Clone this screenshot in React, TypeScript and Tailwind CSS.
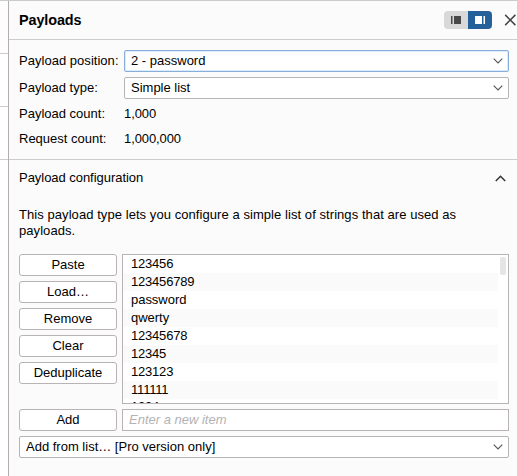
import type { ReactNode } from "react";

const items = ["123456", "123456789", "password", "qwerty", "12345678", "12345", "123123", "111111", "1234"];
const actions = ["Paste", "Load…", "Remove", "Clear", "Deduplicate"];

function Chevron() {
  return (
    <svg className="mr-[5px] shrink-0" width="10" height="6" viewBox="0 0 10 6" fill="none" stroke="#555" strokeWidth="1.1">
      <path d="M0.7 0.7 5 5 9.3 0.7" />
    </svg>
  );
}

function Select({ children, focused = false }: { children: ReactNode; focused?: boolean }) {
  return (
    <div
      className={`flex h-[22px] flex-1 items-center justify-between rounded-[2px] border bg-white pl-1.5 ${
        focused ? "border-[#87afda] shadow-[inset_0_0_0_1px_#dcebfa]" : "border-[#b8b4b6]"
      }`}
    >
      <span>{children}</span>
      <Chevron />
    </div>
  );
}

function Button({ children }: { children: ReactNode }) {
  return (
    <button className="h-[22px] w-[98px] shrink-0 rounded-[3px] border border-[#b8b4b6] bg-white leading-5">
      {children}
    </button>
  );
}

export default function App() {
  return (
    <div className="flex h-[476px] w-[517px] overflow-hidden border-t border-[#c8cccc] bg-[#fbfbfb] font-['Liberation_Sans',Arial,sans-serif] text-[13px] leading-4 text-black">
      <div className="w-2 shrink-0 bg-white">
        <div className="h-[53px] border-b border-[#cccccc] bg-[#fdfdfd]" />
        <div className="h-[53px] border-b border-[#cccccc]" />
        <div className="h-[53px] border-b border-[#cccccc]" />
      </div>
      <div className="flex min-w-0 flex-1 flex-col border-l border-[#b3adb0]">
        <header className="flex h-[39px] shrink-0 items-center border-b border-[#cccccc] pl-2.5">
          <h1 className="flex-1 text-[14.4px] font-bold tracking-[-0.1px]">Payloads</h1>
          <div className="flex h-[18px] w-12 overflow-hidden rounded-[4px]">
            <div className="flex w-6 items-center justify-center bg-[#d9d9d9]">
              <svg width="10" height="8" viewBox="0 0 10 8" fill="#4a4a4a">
                <path d="M0 0h1.5v8H0zM3 0h7v8H3z" />
              </svg>
            </div>
            <div className="flex w-6 items-center justify-center bg-[#24619b]">
              <svg width="10" height="8" viewBox="0 0 10 8" fill="#fff">
                <path d="M0 0h7v8H0zM8.5 0H10v8H8.5z" />
              </svg>
            </div>
          </div>
          <svg className="ml-[12px] shrink-0" width="13" height="12" viewBox="0 0 13 12" fill="none" stroke="#444" strokeWidth="1.5">
            <path d="M1.2 0.9 11.4 11.1M11.4 0.9 1.2 11.1" />
          </svg>
        </header>

        <section className="flex h-[120px] shrink-0 flex-col border-b border-[#cccccc] pt-2.5 pr-2 pl-2.5">
          <div className="flex h-[22px] items-center">
            <span className="w-[105px] tracking-[0.03px]">Payload position:</span>
            <Select focused>2 - password</Select>
          </div>
          <div className="mt-[5px] flex h-[22px] items-center">
            <span className="w-[105px]">Payload type:</span>
            <Select>Simple list</Select>
          </div>
          <div className="mt-[7px] flex">
            <span className="w-[105px]">Payload count:</span>
            <span className="tracking-[-0.1px]">1,000</span>
          </div>
          <div className="mt-[9px] flex">
            <span className="w-[105px]">Request count:</span>
            <span className="tracking-[-0.1px]">1,000,000</span>
          </div>
        </section>

        <section className="flex flex-col pr-2 pl-2.5">
          <div className="mt-2.5 flex items-center justify-between">
            <h2 className="tracking-[-0.04px]">Payload configuration</h2>
            <svg className="mr-[3px]" width="11" height="7" viewBox="0 0 11 7" fill="none" stroke="#333" strokeWidth="1.5">
              <path d="M0.8 6 5.5 1.3 10.2 6" />
            </svg>
          </div>
          <p className="mt-[21px] w-[460px] tracking-[0.065px]">
            This payload type lets you configure a simple list of strings that are used as payloads.
          </p>
          <div className="mt-[15px] flex gap-[5px]">
            <div className="flex flex-col gap-[5px]">
              {actions.map((label) => (
                <Button key={label}>{label}</Button>
              ))}
            </div>
            <div className="flex h-[150px] flex-1 overflow-hidden border border-[#b8b4b6] bg-white">
              <ul className="flex-1">
                {items.map((item) => (
                  <li
                    key={item}
                    className={`h-[18px] pl-2 leading-[18px] last:leading-4 even:bg-[#fafafa] ${/^\d/.test(item) ? "tracking-[-0.2px]" : "tracking-[-0.03px]"}`}
                  >
                    {item}
                  </li>
                ))}
              </ul>
              <div className="w-[10px]">
                <div className="mt-0.5 ml-0.5 h-[18px] w-1.5 rounded-[2px] bg-[#e5e5e5]" />
              </div>
            </div>
          </div>
          <div className="mt-[5px] flex gap-[5px]">
            <Button>Add</Button>
            <input
              className="h-[22px] min-w-0 flex-1 border border-[#b8b4b6] bg-white px-1.5 pb-0.5 italic outline-none placeholder:text-[#b3b3b3]"
              placeholder="Enter a new item"
            />
          </div>
          <div className="mt-[5px] flex">
            <Select>Add from list… [Pro version only]</Select>
          </div>
        </section>
      </div>
    </div>
  );
}
